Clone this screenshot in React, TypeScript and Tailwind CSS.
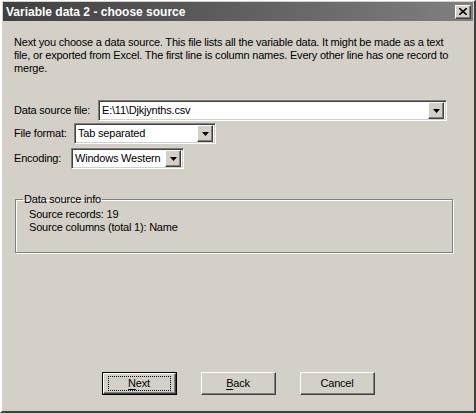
import React from "react";

const raised =
  "border border-t-white border-l-white border-b-[#404040] border-r-[#404040] shadow-[inset_-1px_-1px_0_#808080]";
const sunken =
  "border border-t-[#808080] border-l-[#808080] border-b-white border-r-white shadow-[inset_1px_1px_0_#404040,inset_-1px_-1px_0_#d4d0c8]";

function Arrow() {
  return (
    <div className={`flex h-[17px] w-[16px] items-center justify-center bg-[#d4d0c8] ${raised}`}>
      <svg width="7" height="4" viewBox="0 0 7 4">
        <path d="M0 0h7L3.5 4z" fill="#000" />
      </svg>
    </div>
  );
}

function Combo({ value, width }: { value: string; width: string }) {
  return (
    <div className={`flex h-[21px] items-center bg-white pl-[3px] pr-[2px] ${sunken} ${width}`}>
      <span className="flex-1 truncate">{value}</span>
      <Arrow />
    </div>
  );
}

function Button({ ul, rest, isDefault }: { ul: string; rest: string; isDefault?: boolean }) {
  return (
    <div className={`h-[23px] w-[75px] ${isDefault ? "border border-black" : ""}`}>
      <div className={`flex h-full w-full items-center justify-center bg-[#d4d0c8] ${raised}`}>
        <div className={`flex items-center justify-center ${isDefault ? "h-[15px] w-[63px] border border-dotted border-black" : ""}`}>
          <span>
            <span className="underline underline-offset-2">{ul}</span>
            {rest}
          </span>
        </div>
      </div>
    </div>
  );
}

export default function App() {
  return (
    <div
      className="flex h-[413px] w-[476px] flex-col border-l-[2px] border-t-[1px] border-r-[2px] border-b-[2px] border-l-white border-t-white border-r-[#404040] border-b-[#404040] bg-[#d4d0c8] text-[11px] tracking-[-0.2px] text-black"
      style={{ fontFamily: "'Liberation Sans', Arial, sans-serif" }}
    >
      <div className="mx-[1px] mt-[1px] flex h-[19px] items-center justify-between bg-gradient-to-r from-[#404040] to-[#808080] pl-[3px] pr-[2px]">
        <span className="text-[12px] font-bold tracking-normal text-white">Variable data 2 - choose source</span>
        <div className={`flex h-[14px] w-[16px] items-center justify-center bg-[#d4d0c8] ${raised}`}>
          <svg width="8" height="7" viewBox="0 0 8 7">
            <path d="M0 0l8 7M8 0L0 7" stroke="#000" strokeWidth="1.6" />
          </svg>
        </div>
      </div>

      <div className="flex flex-1 flex-col px-[12px]">
        <p className="mt-[15px] whitespace-nowrap leading-[13px]">
          Next you choose a data source. This file lists all the variable data. It might be made as a text
          <br />
          file, or exported from Excel. The first line is column names. Every other line has one record to
          <br />
          merge.
        </p>

        <div className="mt-[25px] flex items-center">
          <span className="w-[84px]">Data source file:</span>
          <Combo value="E:\11\Djkjynths.csv" width="w-[349px]" />
        </div>
        <div className="mt-[2px] flex items-center">
          <span className="w-[60px]">File format:</span>
          <Combo value="Tab separated" width="w-[142px]" />
        </div>
        <div className="mt-[4px] flex items-center">
          <span className="w-[57px]">Encoding:</span>
          <Combo value="Windows Western" width="w-[113px]" />
        </div>

        <fieldset className="mt-[24px] ml-[1px] mr-[9px] h-[60px] border border-[#808080] px-[13px] pb-[6px] shadow-[inset_1px_1px_0_#fff,1px_1px_0_#fff]">
          <legend className="ml-[-6px] px-[1px] leading-[13px]">Data source info</legend>
          <div className="mt-[2px] leading-[13px]">Source records: 19</div>
          <div className="leading-[13px]">Source columns (total 1): Name</div>
        </fieldset>

        <div className="mt-auto mb-[16px] flex justify-center gap-[24px]">
          <Button ul="N" rest="ext" isDefault />
          <Button ul="B" rest="ack" />
          <Button ul="" rest="Cancel" />
        </div>
      </div>
    </div>
  );
}
